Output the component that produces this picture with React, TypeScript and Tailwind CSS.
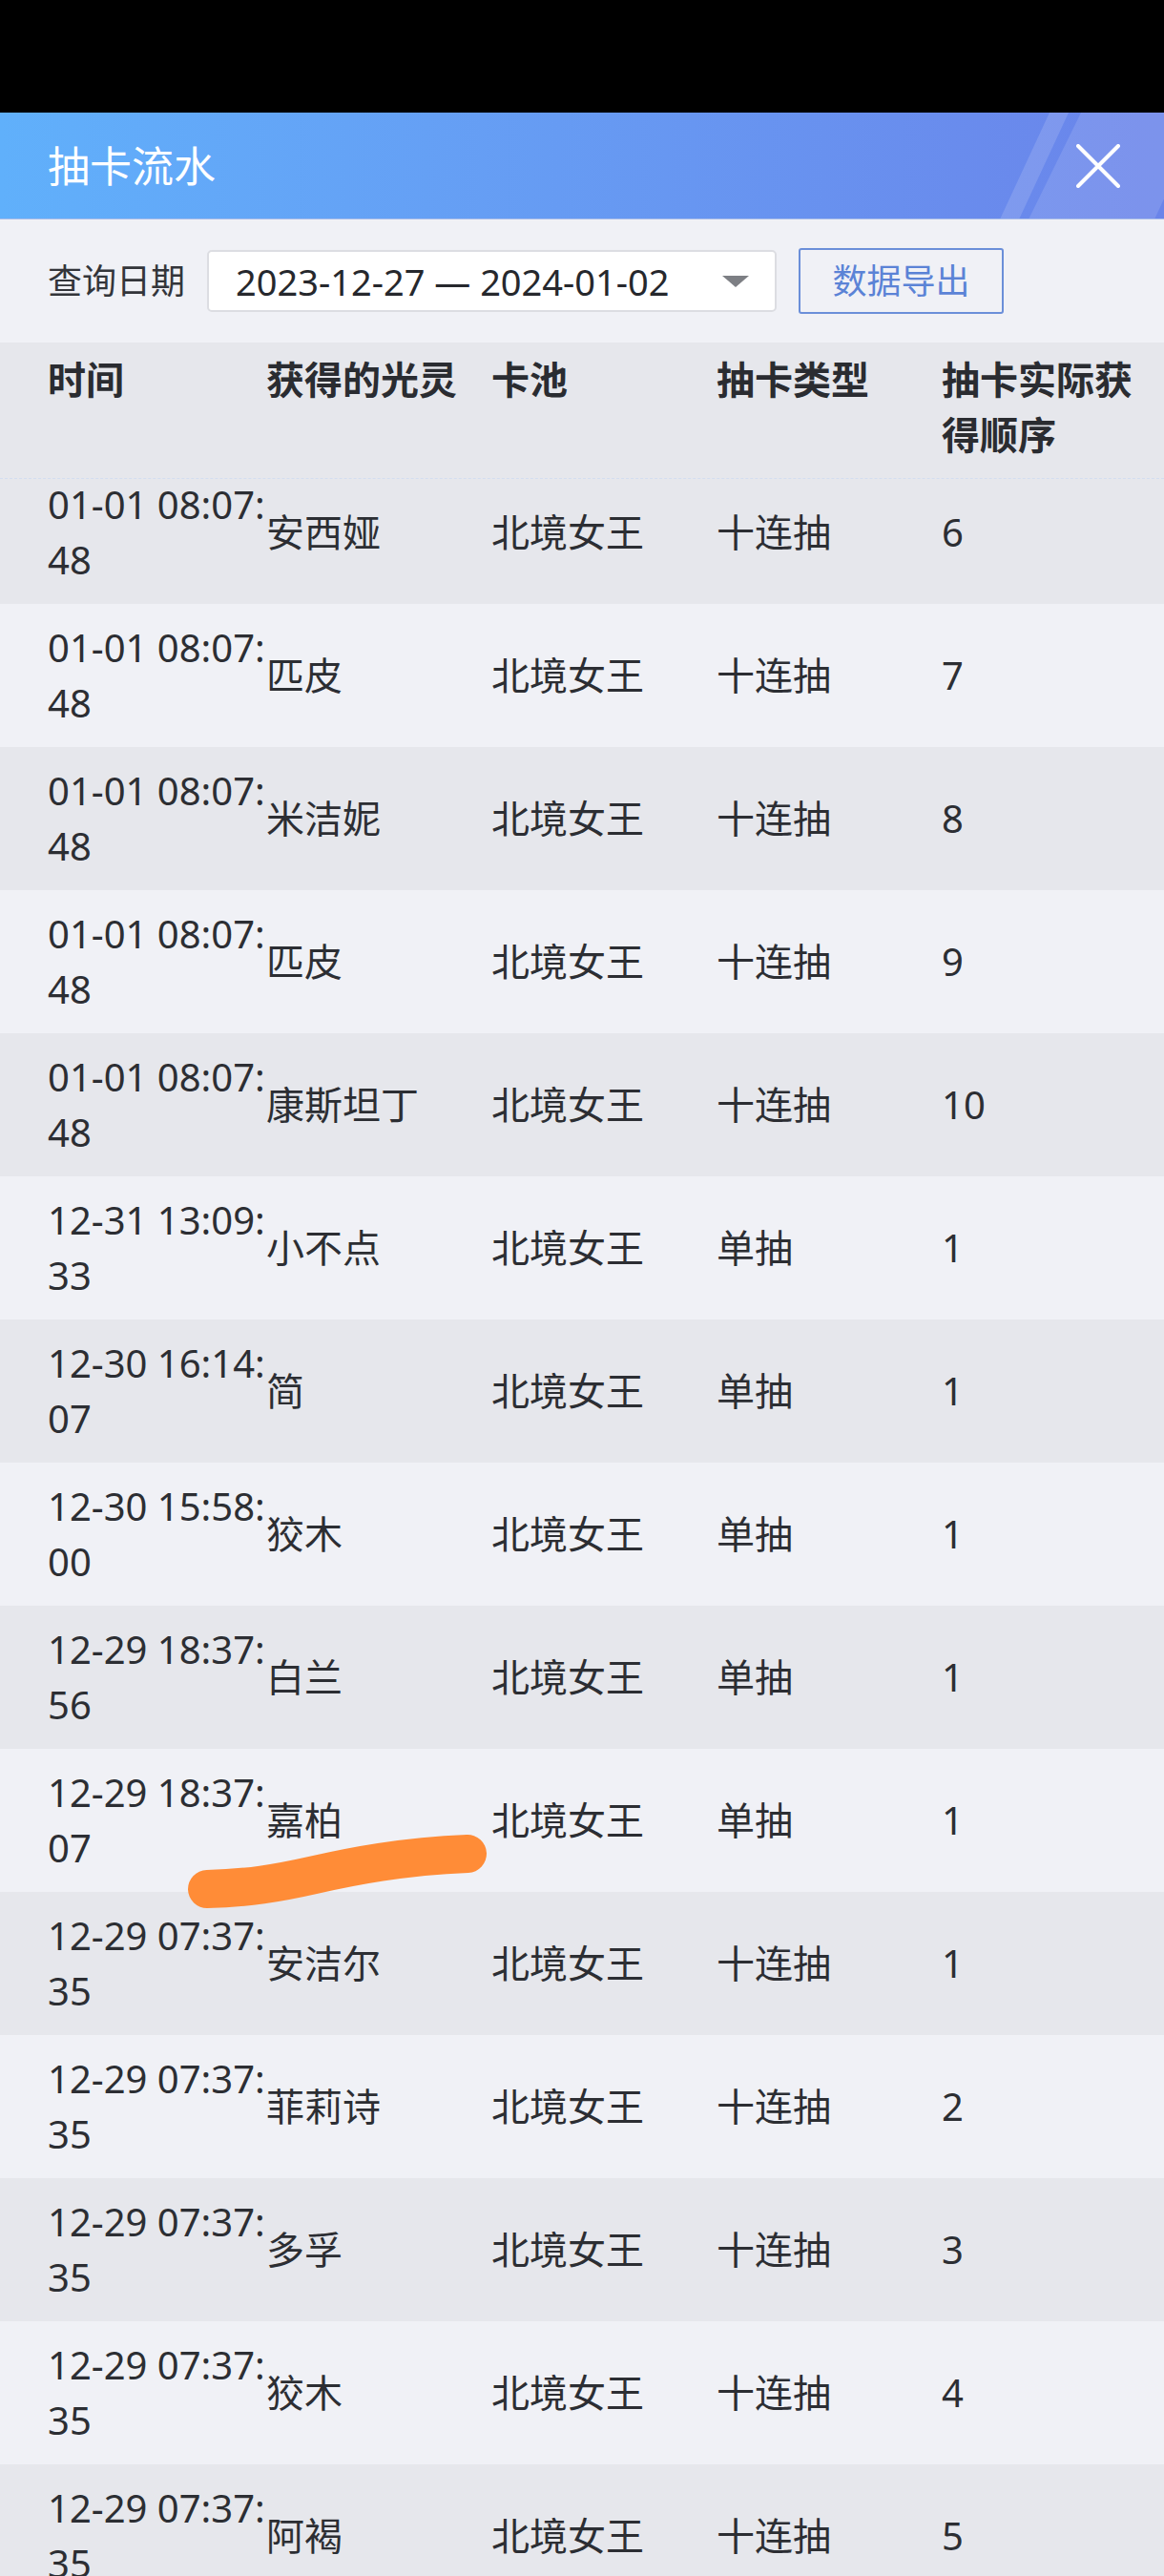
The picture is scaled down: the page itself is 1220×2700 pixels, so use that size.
import React from "react";

type Row = { time: string; name: string; pool: string; kind: string; order: string };

const rows: Row[] = [
  { time: "01-01 08:07:48", name: "安西娅", pool: "北境女王", kind: "十连抽", order: "6" },
  { time: "01-01 08:07:48", name: "匹皮", pool: "北境女王", kind: "十连抽", order: "7" },
  { time: "01-01 08:07:48", name: "米洁妮", pool: "北境女王", kind: "十连抽", order: "8" },
  { time: "01-01 08:07:48", name: "匹皮", pool: "北境女王", kind: "十连抽", order: "9" },
  { time: "01-01 08:07:48", name: "康斯坦丁", pool: "北境女王", kind: "十连抽", order: "10" },
  { time: "12-31 13:09:33", name: "小不点", pool: "北境女王", kind: "单抽", order: "1" },
  { time: "12-30 16:14:07", name: "简", pool: "北境女王", kind: "单抽", order: "1" },
  { time: "12-30 15:58:00", name: "狡木", pool: "北境女王", kind: "单抽", order: "1" },
  { time: "12-29 18:37:56", name: "白兰", pool: "北境女王", kind: "单抽", order: "1" },
  { time: "12-29 18:37:07", name: "嘉柏", pool: "北境女王", kind: "单抽", order: "1" },
  { time: "12-29 07:37:35", name: "安洁尔", pool: "北境女王", kind: "十连抽", order: "1" },
  { time: "12-29 07:37:35", name: "菲莉诗", pool: "北境女王", kind: "十连抽", order: "2" },
  { time: "12-29 07:37:35", name: "多孚", pool: "北境女王", kind: "十连抽", order: "3" },
  { time: "12-29 07:37:35", name: "狡木", pool: "北境女王", kind: "十连抽", order: "4" },
  { time: "12-29 07:37:35", name: "阿褐", pool: "北境女王", kind: "十连抽", order: "5" },
];

const cols = "grid grid-cols-[229px_236px_236px_236px_1fr] pl-[50px]";

export default function App() {
  return (
    <div className="relative w-[1220px] h-[2700px] overflow-hidden bg-[#f0f1f6] text-[#2c2e33] font-['Noto_Sans','Noto_Sans_CJK_SC',sans-serif]">
      <div className="h-[118px] bg-black" />

      {/* title bar */}
      <div className="relative h-[112px] overflow-hidden bg-gradient-to-r from-[#60b0fb] to-[#6a84ea] border-b border-[#a7bbe9] flex items-center pl-[50px] pr-[46px]">
        <svg className="absolute inset-0" width="1220" height="112" viewBox="0 0 1220 112">
          <polygon points="1100,0 1120,0 1068,112 1048,112" fill="#ffffff" fillOpacity="0.14" />
          <polygon points="1133,0 1262,0 1210,112 1078,112" fill="#ffffff" fillOpacity="0.12" />
        </svg>
        <h1 className="relative text-[44px] text-white font-normal leading-none">抽卡流水</h1>
        <svg className="relative ml-auto" width="46" height="46" viewBox="0 0 46 46">
          <path d="M2 2 L44 44 M44 2 L2 44" stroke="#fff" strokeWidth="4" strokeLinecap="round" />
        </svg>
      </div>

      {/* filter */}
      <div className="h-[129px] flex items-center pl-[50px]">
        <span className="text-[36px] text-[#33353a]">查询日期</span>
        <div className="ml-[23px] w-[597px] h-[65px] bg-white border-2 border-[#dcdde2] rounded-[5px] flex items-center pl-[28px] pr-[27px]">
          <span className="text-[38px] text-[#26282d] leading-none whitespace-nowrap">2023-12-27 — 2024-01-02</span>
          <svg className="ml-auto" width="28" height="12" viewBox="0 0 28 12">
            <polygon points="0,0 28,0 14,12" fill="#7d7f84" />
          </svg>
        </div>
        <button className="ml-[23px] w-[215px] h-[69px] border-2 border-[#6b8fd9] rounded-[3px] text-[36px] text-[#5b83d6] flex items-center justify-center">
          数据导出
        </button>
      </div>

      {/* table header */}
      <div className={`${cols} h-[143px] items-start pt-[10px] bg-[#e6e7ec] border-b border-dashed border-[#d3def0] text-[40px] leading-[58px] font-bold text-[#2a2c31]`}>
        <div>时间</div>
        <div>获得的光灵</div>
        <div>卡池</div>
        <div>抽卡类型</div>
        <div className="pr-[30px]">抽卡实际获得顺序</div>
      </div>

      {/* table body, scrolled under header */}
      <div className="h-[2198px] overflow-hidden">
        <div className="-mt-[19px]">
          {rows.map((r, i) => (
            <div
              key={i}
              className={`${cols} h-[150px] items-center text-[40px] leading-[58px] ${i % 2 === 0 ? "bg-[#e6e7ec]" : "bg-[#f0f1f6]"}`}
            >
              <div className="break-all">{r.time}</div>
              <div>{r.name}</div>
              <div>{r.pool}</div>
              <div>{r.kind}</div>
              <div>{r.order}</div>
            </div>
          ))}
        </div>
      </div>

      {/* orange scribble over row */}
      <svg className="absolute left-0 top-0 pointer-events-none" width="1220" height="2700" viewBox="0 0 1220 2700">
        <path
          d="M217 1980 C 260 1979, 290 1974, 330 1965 S 420 1946, 490 1943"
          stroke="#ff8c37"
          strokeWidth="40"
          strokeLinecap="round"
          fill="none"
        />
      </svg>
    </div>
  );
}
